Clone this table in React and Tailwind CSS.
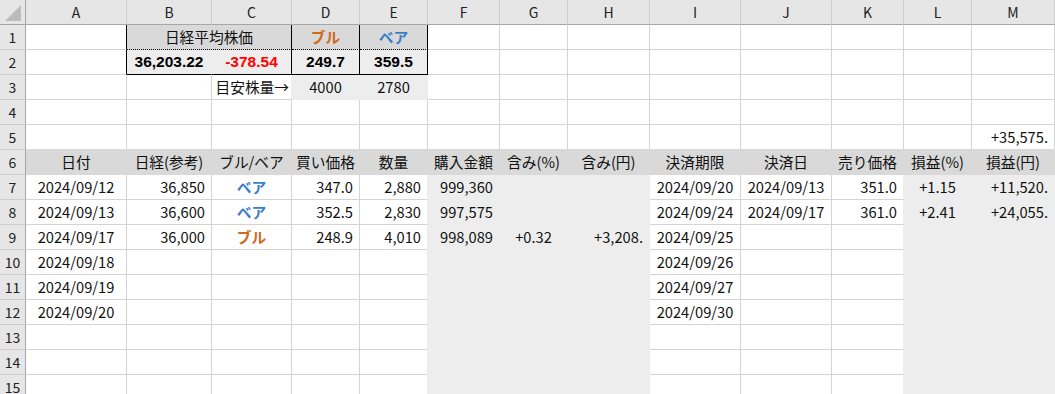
import React from 'react'

const COLS = ['A', 'B', 'C', 'D', 'E', 'F', 'G', 'H', 'I', 'J', 'K', 'L', 'M']

// cell fill: w = white, h = header gray, l = light gray
function fillOf(r, c) {
  if (r < 1 || r > 15 || c < 0 || c > 12) return 'w'
  if (r === 1 && c >= 1 && c <= 4) return 'h'
  if (r === 2 && c >= 1 && c <= 4) return 'l'
  if (r === 3 && (c === 3 || c === 4)) return 'l'
  if (r === 6) return 'h'
  if (r >= 7 && (c === 5 || c === 6 || c === 7 || c === 11 || c === 12)) return 'l'
  return 'w'
}

const BG = { w: 'bg-white', h: 'bg-[#d9d9d9]', l: 'bg-[#ededed]' }
const BORDER_R = {
  g: 'border-r-[#d4d4d4]',
  h: 'border-r-[#d9d9d9]',
  l: 'border-r-[#ededed]',
  k: 'border-r-black',
}
const BORDER_B = {
  g: 'border-b-[#d4d4d4]',
  h: 'border-b-[#d9d9d9]',
  l: 'border-b-[#ededed]',
  k: 'border-b-black',
  dot: 'border-b-black [border-bottom-style:dotted]',
}
const ALIGN = {
  c: 'justify-center',
  r: 'justify-end pr-[6px]',
  r2: 'justify-end pr-[2px]',
}
const STYLE = {
  orange: 'font-bold text-[#cf6a1a]',
  blue: 'font-bold text-[#3b7dc9]',
  big: "font-bold font-['Liberation_Sans',Arial,sans-serif] text-[15.5px] text-black",
  red: "font-bold font-['Liberation_Sans',Arial,sans-serif] text-[15.5px] text-[#ff0000]",
}

const bull = { t: 'ブル', a: 'c', s: 'orange' }
const bear = { t: 'ベア', a: 'c', s: 'blue' }
const date = (t) => ({ t, a: 'c' })
const num = (t) => ({ t, a: 'r' })

const DATA = {
  1: { B: { t: '日経平均株価', a: 'c', span: 2 }, D: bull, E: bear },
  2: {
    B: { t: '36,203.22', a: 'c', s: 'big' },
    C: { t: '-378.54', a: 'c', s: 'red' },
    D: { t: '249.7', a: 'c', s: 'big' },
    E: { t: '359.5', a: 'c', s: 'big' },
  },
  3: { C: { t: '目安株量→', a: 'r2' }, D: { t: '4000', a: 'c' }, E: { t: '2780', a: 'c' } },
  5: { M: num('+35,575.') },
  6: {
    A: date('日付'), B: date('日経(参考)'), C: date('ブル/ベア'), D: date('買い価格'),
    E: date('数量'), F: date('購入金額'), G: date('含み(%)'), H: date('含み(円)'),
    I: date('決済期限'), J: date('決済日'), K: date('売り価格'), L: date('損益(%)'), M: date('損益(円)'),
  },
  7: {
    A: date('2024/09/12'), B: num('36,850'), C: bear, D: num('347.0'), E: num('2,880'),
    F: num('999,360'), I: date('2024/09/20'), J: date('2024/09/13'), K: num('351.0'),
    L: date('+1.15'), M: num('+11,520.'),
  },
  8: {
    A: date('2024/09/13'), B: num('36,600'), C: bear, D: num('352.5'), E: num('2,830'),
    F: num('997,575'), I: date('2024/09/24'), J: date('2024/09/17'), K: num('361.0'),
    L: date('+2.41'), M: num('+24,055.'),
  },
  9: {
    A: date('2024/09/17'), B: num('36,000'), C: bull, D: num('248.9'), E: num('4,010'),
    F: num('998,089'), G: date('+0.32'), H: num('+3,208.'), I: date('2024/09/25'),
  },
  10: { A: date('2024/09/18'), I: date('2024/09/26') },
  11: { A: date('2024/09/19'), I: date('2024/09/27') },
  12: { A: date('2024/09/20'), I: date('2024/09/30') },
}

function rightKey(r, c) {
  // black box around B1:E2
  if ((r === 1 || r === 2) && c >= 0 && c <= 4) {
    if (c === 0 || c >= 2) return 'k'
  }
  const f = fillOf(r, c)
  if (f !== 'w') return f
  const n = fillOf(r, c + 1)
  if (n !== 'w') return n
  return 'g'
}

function bottomKey(r, c) {
  if (r === 1 && c >= 1 && c <= 4) return 'dot'
  if (r === 2 && c >= 1 && c <= 4) return 'k'
  const f = fillOf(r, c)
  if (f !== 'w') return f
  const n = fillOf(r + 1, c)
  if (n !== 'w') return n
  return 'g'
}

function Cell({ r, c }) {
  const cell = DATA[r]?.[COLS[c]]
  return (
    <div
      className={[
        'h-[25px] flex items-center overflow-hidden whitespace-nowrap border-r border-b leading-none',
        BG[fillOf(r, c)],
        BORDER_R[rightKey(r, cell?.span ? c + 1 : c)],
        BORDER_B[bottomKey(r, c)],
        cell ? ALIGN[cell.a] : '',
        cell?.s ? STYLE[cell.s] : '',
        cell?.span ? 'col-span-2' : '',
      ].join(' ')}
    >
      {cell?.t}
    </div>
  )
}

export default function App() {
  const rows = Array.from({ length: 15 }, (_, i) => i + 1)

  return (
    <div className="w-[1055px] h-[394px] overflow-hidden bg-white text-[14.7px] text-[#111] font-['Noto_Sans_CJK_JP','Noto_Sans',sans-serif]">
      <div className="grid grid-cols-[26px_101px_85px_80px_68px_68px_72px_68px_82px_91px_91px_72px_68px_83px] auto-rows-[25px]">
        {/* corner */}
        <div className="h-[25px] bg-[#e6e6e6] border-r border-b border-r-[#a6a6a6] border-b-[#a6a6a6]">
          <svg width="25" height="24" viewBox="0 0 25 24">
            <polygon points="21,5 21,21 5,21" fill="#bcbcbc" />
          </svg>
        </div>
        {/* column letters */}
        {COLS.map((col) => (
          <div
            key={col}
            className="h-[25px] flex items-center justify-center bg-[#e6e6e6] border-r border-b border-r-[#cdcdcd] border-b-[#a6a6a6] text-[14px] text-[#222] leading-none"
          >
            {col}
          </div>
        ))}

        {rows.map((r) => (
          <React.Fragment key={r}>
            <div className="h-[25px] flex items-center justify-center bg-[#e6e6e6] border-r border-b border-r-[#a6a6a6] border-b-[#cdcdcd] text-[14px] text-[#222] leading-none">
              {r}
            </div>
            {COLS.map((col, c) => {
              if (r === 1 && c === 2) return null
              return <Cell key={col} r={r} c={c} />
            })}
          </React.Fragment>
        ))}
      </div>
    </div>
  )
}
